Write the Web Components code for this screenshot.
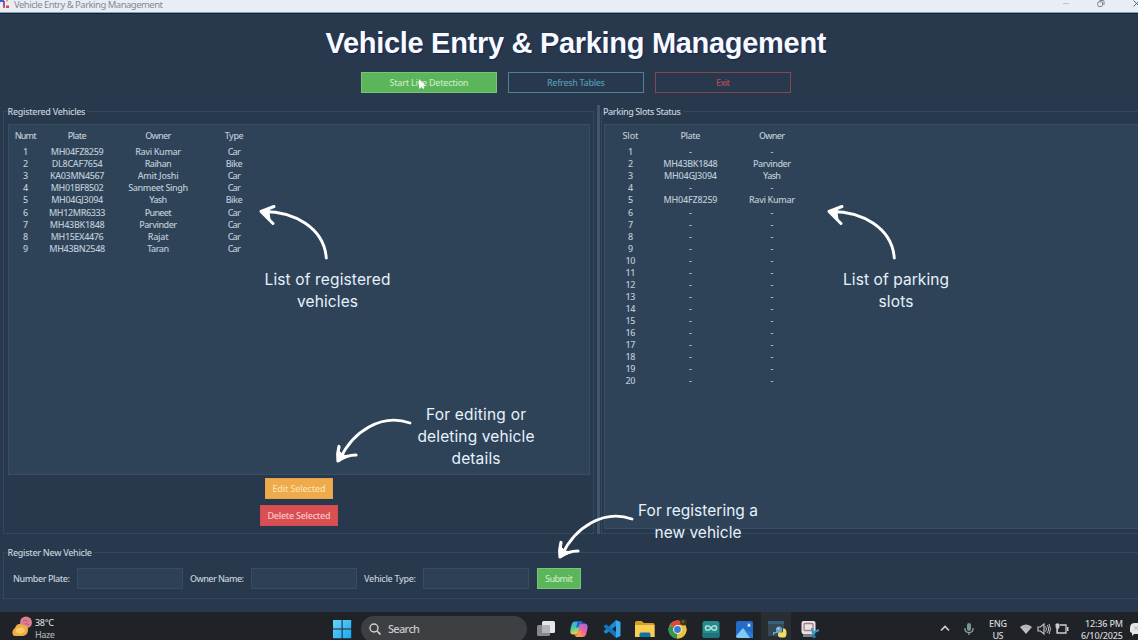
<!DOCTYPE html>
<html lang="en">
<head>
<meta charset="utf-8">
<title>Vehicle Entry &amp; Parking Management</title>
<style>
html,body{margin:0;height:100%;overflow:hidden;background:#28394e}
body{font-family:"Noto Sans","Open Sans",sans-serif;font-size:9px;font-weight:500;line-height:1.2;color:#c3ceda}
</style>
</head>
<body>
<parking-app></parking-app>
<script>
const define = (name, html, setup) => customElements.define(name, class extends HTMLElement {
  connectedCallback() {
    if (this.shadowRoot) return;
    const t = document.createElement('template');
    t.innerHTML = html;
    this.attachShadow({mode: 'open'}).append(t.content.cloneNode(true));
    if (setup) setup(this, this.shadowRoot);
  }
});

/* A single line of text tracked so that it fills the width given in "w". */
define('fit-text', `<style>
:host{display:inline-block;white-space:pre}
span{display:inline-block}
</style><span><slot></slot></span>`, (el, root) => {
  const w = parseFloat(el.getAttribute('w'));
  if (!w) return;
  const s = root.querySelector('span');
  const n = el.textContent.length;
  if (n < 2) return;
  const ls = (w - s.getBoundingClientRect().width) / (n - 1);
  s.style.letterSpacing = ls + 'px';
  s.style.marginRight = -ls + 'px';
});

define('title-bar', `<style>
:host{display:flex;height:13px;background:#e8eff4;border-bottom:1px solid #8ba0b5;box-shadow:0 1px 0 #10233a;align-items:flex-start;color:#85898f;position:relative}
.logo{width:9px;height:9px;flex:none}
.name{margin:0 0 0 5px;flex:1;font-size:9.5px;font-weight:400;line-height:9px;height:9px}
.b{width:10px;height:10px;flex:none}
</style>
<svg class="logo" viewBox="0 0 9 9"><path d="M0 0h4v2H0z" fill="#3465c0"/><path d="M3 1h2v5H3z" fill="#a04ba8"/><path d="M3 6h2v2H3z" fill="#e65a32"/><path d="M6 5.5h3V8H6z" fill="#d94457"/><path d="M6 0h2v1.5H6z" fill="#f0a03c"/></svg>
<div class="name"><fit-text w="149">Vehicle Entry &amp; Parking Management</fit-text></div>
<svg class="b" style="margin-right:25px" viewBox="0 0 10 10"><path d="M2 3.5h6" stroke="#bcc2c7" fill="none"/></svg>
<svg class="b" style="margin-right:26px" viewBox="0 0 10 10"><rect x="1.8" y="1.8" width="4.7" height="4.7" rx="1" fill="none" stroke="#7d8287"/><path d="M3.5 .5H7q1 0 1 1V5" fill="none" stroke="#7d8287"/></svg>
<svg class="b" style="margin-right:-4px" viewBox="0 0 10 10"><path d="M1.5 .5l6 6M7.5 .5l-6 6" stroke="#64696e" fill="none"/></svg>`);

define('app-button', `<style>
:host{display:flex;box-sizing:border-box;height:21px;align-items:center;justify-content:center;border:1px solid;font-size:9px;flex:none;position:relative;padding-top:1.5px}
:host([kind=success]){background:#5ab658;border-color:#79c678;color:#c7eac5}
:host([kind=warning]){background:#efab4b;border-color:#e5a44b;color:#fae0ac}
:host([kind=danger]){background:#d94f52;border-color:#cf4d51;color:#fac6c5}
:host([kind=info]){border:1.5px solid #4f8299;color:#5298b3}
:host([kind=exit]){border:1.5px solid #874651;color:#b44b50}
</style><slot></slot>`);

/* Group box with its caption set into the top rule. */
define('group-box', `<style>
:host{display:block;box-sizing:border-box;position:relative}
fieldset{margin:0;border:1.5px solid #33475d;padding:0;height:100%;box-sizing:border-box;min-width:0}
legend{padding:0 2px 0 1px;margin-left:var(--cap,3px);line-height:14px;height:12px;color:#c5d0dc;font-size:9px}
</style><fieldset><legend><fit-text></fit-text></legend><slot></slot></fieldset>`, (el, root) => {
  const old = root.querySelector('fit-text');
  const cap = document.createElement('fit-text');
  cap.textContent = el.getAttribute('caption');
  cap.setAttribute('w', el.getAttribute('w'));
  old.replaceWith(cap);
});

define('data-table', `<style>
:host{display:block;box-sizing:border-box;background:#2f4358;border:1.5px solid #394e63;font-size:9px;color:#bdc9d5}
.row{display:grid;grid-template-columns:var(--cols);justify-items:center;height:12.05px;line-height:12px}
.head{height:16.3px;padding-top:5px;line-height:13px}
fit-text{line-height:12px}
</style><div class="t"></div>`, (el, root) => {
  const box = root.querySelector('.t');
  const [head, ...rows] = el.getAttribute('rows').split(';').map(r => r.split(','));
  [head, ...rows].forEach((r, i) => {
    const d = document.createElement('div');
    d.className = i ? 'row' : 'row head';
    box.append(d);
    r.forEach(c => {
      const [text, w] = c.split('|');
      const f = document.createElement('fit-text');
      f.textContent = text;
      if (w) f.setAttribute('w', w);
      d.append(f);
    });
  });
});

define('text-field', `<style>
:host{display:block;box-sizing:border-box;height:21px;width:106px;background:#2d4056;border:1px solid #384b60;flex:none}
</style>`);

define('call-out', `<style>
:host{display:flex;flex-direction:column;align-items:center;position:absolute;transform:translateX(-50%);font:400 15.5px/22px Inter,sans-serif;color:#e6f2fc}
</style><slot></slot>`);

define('curved-arrow', `<style>
:host{display:block;position:absolute;width:84px;height:60px}
svg{display:block;width:84px;height:60px}
path{fill:none;stroke:#fff;stroke-linecap:round;stroke-linejoin:round}
</style><svg viewBox="0 0 84 60"></svg>`, (el, root) => {
  root.querySelector('svg').innerHTML = el.getAttribute('turn') === 'up'
    ? '<path d="M4 8.500C36 8 66 25 68.300 55" stroke-width="2.900"/><path d="M16 3.500L3 8.500L15 20.500" stroke-width="3"/><path d="M3 8.500l9-3.500-1 4 1 7z" style="fill:#fff" stroke-width="1"/>'
    : '<path d="M76 10C48 0 19 18 6 46" stroke-width="2.900"/><path d="M5 33.500Q3 41 4 48Q12 42 22 42" stroke-width="3.200"/><path d="M4 48l1-10 4 4 6 1z" style="fill:#fff" stroke-width="1"/>';
});

define('task-icon', `<style>
:host{display:flex;width:33px;height:28px;align-items:center;justify-content:center;flex:none}
:host([active]){background:linear-gradient(90deg,transparent 1px,#292e32 1px 31px,transparent 31px)}
svg{display:block;width:20px;height:20px;margin-top:5px}
</style><svg viewBox="0 0 20 20"></svg>`, (el, root) => {
  const art = {
    tasks: '<rect x="6" y="2" width="13" height="12" rx="1.5" fill="#e5e6e7"/><rect x="1" y="6" width="13" height="11" rx="1.5" fill="#84888b"/><path d="M6 6h8v8H6z" fill="#b1b4b6"/>',
    copilot: '<defs><linearGradient id="a" x1="0" y1="0" x2=".3" y2="1"><stop stop-color="#3ba1ef"/><stop offset=".5" stop-color="#43c9ac"/><stop offset="1" stop-color="#eed24a"/></linearGradient><linearGradient id="b" x1="1" y1="0" x2=".3" y2="1"><stop stop-color="#a65ef0"/><stop offset=".55" stop-color="#ed659b"/><stop offset="1" stop-color="#f7a049"/></linearGradient></defs><path d="M5.500 2.500H13L8.700 14Q8 15.500 6 15.500H4Q1 15.500 1.300 12Q1.600 8 3 4.500Q3.800 2.500 5.500 2.500z" fill="url(#a)"/><path d="M13.500 18H7l4.300-12Q12 4.500 14 4.500h2Q19 5 18.600 8.500Q18 12.500 17 15.500Q16 18 13.500 18z" fill="url(#b)"/><path d="M8.500 2.500H12q2 0 2.700 2H12q-1 0-1.500 1.500L9.600 8.500H7z" fill="#2866d5"/><path d="M5.300 15.500H8l1.400-3.500h3l-1.600 4.500Q10.300 18 8.500 18Q6.300 18 5.300 15.500z" fill="#f59a52"/>',
    code: '<path d="M14 1l4.500 2v14L14 19z" fill="#38a9ef"/><path d="M14 1L1.500 12.500L4 14.800L14 7z" fill="#188bd5"/><path d="M14 19L1.500 7.500L4 5.200L14 13z" fill="#1476bb"/>',
    files: '<path d="M0 3.500q0-1.500 1.500-1.500h5L9 4h9q1.500 0 1.500 1.500V18H0z" fill="#d99b26"/><path d="M0 6h19.500v12H0z" fill="#f8ce55"/><path d="M4.500 18v-3q0-1.500 1.500-1.500h8q1.500 0 1.500 1.500v3z" fill="#1570a8"/>',
    chrome: '<circle cx="9.500" cy="10.500" r="9" fill="#ecc53d"/><path d="M9.500 10.500L1.700 6A9 9 0 0 1 17.300 6z" fill="#dc4a3c"/><path d="M9.500 10.500L1.700 6A9 9 0 0 0 9 19.500z" fill="#31984f"/><path d="M9.500 10.500L13.400 12.700L9 19.500A9 9 0 0 0 17.300 6H9.500z" fill="#ecc53d"/><circle cx="9.500" cy="10.500" r="4.400" fill="#f3f4ee"/><circle cx="9.500" cy="10.500" r="3.400" fill="#397bd1"/><circle cx="15.500" cy="3" r="3.400" fill="#39341f"/><circle cx="15" cy="2.700" r="1.300" fill="#74632c"/>',
    arduino: '<rect x="1.500" y="2" width="17" height="17" rx="2.500" fill="#278b8d"/><path d="M1.500 14h17v2.500q0 2.500-2.500 2.500H4q-2.500 0-2.500-2.500z" fill="#1b777b"/><path d="M10 9C8 6 4.500 6 4.500 9S8 12 10 9S15.500 6 15.500 9S12 12 10 9z" fill="none" stroke="#b1e4df" stroke-width="1.500"/>',
    photos: '<rect x="2" y="2" width="17" height="17" rx="2" fill="#236bc5"/><path d="M2 17l7-8 9 10H4q-2 0-2-2z" fill="#80caf5"/><path d="M9 9l4 4.500 2-2 4 4V19h-3z" fill="#2b7bd4"/><path d="M13.500 4l1.500 1.300L16.500 4 16 6.200l1 1.300h-4l1-1.300z" fill="#e3f3fd"/>',
    python: '<rect x="1" y="2" width="16" height="15" fill="#344956"/><path d="M1 2h16v3H1z" fill="#365f82"/><path d="M9 13v-3q0-2.500 3-2.500t3 2.500v2q0 2-2 2H9q-2 0-2 2H6v-3z" fill="#6ea4cb"/><path d="M16 9.500h1q2.500 0 2.500 4.500t-2.500 4.500h-3q-3 0-3-2.500V15q0-1.500 2-1.500h1.500Q16 13.500 16 12z" fill="#f3dc66"/><circle cx="11.200" cy="9.500" r=".7" fill="#fff"/>',
    snip: '<rect x="1.500" y="2" width="14" height="13" rx="2" fill="#e7e3e5"/><rect x="4" y="4.500" width="9" height="7" rx="1" fill="none" stroke="#a87c86" stroke-width="1.300"/><path d="M3 15h10v3H3z" fill="#78818b"/><path d="M12 9l2 9M19 11l-7 3" stroke="#3197c3" stroke-width="2"/><circle cx="14" cy="17.500" r="1.800" fill="#247ea8"/>',
    start: '<defs><linearGradient id="s" x1="0" y1="0" x2="1" y2="1"><stop stop-color="#68d3fa"/><stop offset="1" stop-color="#1ca7ef"/></linearGradient></defs><path d="M1 1h8.600v8.600H1zM10.600 1h8.600v8.600h-8.600zM1 10.600h8.600v8.600H1zM10.600 10.600h8.600v8.600h-8.600z" fill="url(#s)"/>'
  };
  root.querySelector('svg').innerHTML = art[el.getAttribute('name')];
});

define('task-bar', `<style>
:host{display:flex;height:28px;background:#1f2226;overflow:hidden;color:#d5d7d9;font-size:9px}
.weather{width:322px;display:flex;box-sizing:border-box;padding:2px 0 0 11px;gap:2px;flex:none}
.weather>svg{width:22px;height:24px;flex:none}
.two{display:flex;flex-direction:column;flex:none}
.two fit-text{line-height:12px;height:12px}
.search{box-sizing:border-box;width:166px;height:26px;margin:4px 2px 0 3px;background:#3d4042;border-radius:13px;display:flex;align-items:center;padding-left:8px;gap:7px;font-size:11px;flex:none;color:#c8cacb}
.search svg{width:12px;height:12px}
.tray{margin-left:auto;display:flex;flex:none;width:200px}
.tray>svg{height:14px;flex:none;margin-top:10px}
</style>
<div class="weather"><svg viewBox="0 0 22 24"><circle cx="15" cy="8.500" r="6" fill="#dc7f91"/><path d="M2 21Q0 17 4 14Q6 8 12 11Q17 11 17 16Q17 21 12 22H5Q2 22 2 21z" fill="#f1ac43"/><path d="M5 18Q4 14 8 14Q13 12 14 17Q10 22 5 18z" fill="#f8ce69"/><path d="M12 7q3-2 5 1M14 10q2-1 4 1" stroke="#ad5973" fill="none"/></svg>
<div class="two" style="margin-top:3px"><fit-text w="19">38°C</fit-text><fit-text w="20" style="color:#a7aaad">Haze</fit-text></div></div>
<slot name="start"></slot>
<div class="search"><svg viewBox="0 0 12 12"><circle cx="5" cy="5" r="4" fill="none" stroke="#d0d2d3" stroke-width="1.400"/><path d="M8 8l3.500 3.500" stroke="#d0d2d3" stroke-width="1.700"/></svg><fit-text w="32">Search</fit-text></div>
<slot></slot>
<div class="tray">
<svg style="width:10px;margin-left:2px" viewBox="0 0 10 14"><path d="M1 8.500L5 4.500L9 8.500" fill="none" stroke="#cfd1d2" stroke-width="1.600"/></svg>
<svg style="width:10px;margin-left:14px" viewBox="0 0 10 14"><rect x="3" y="1" width="4" height="8" rx="2" fill="#6f9a95"/><path d="M1 6v1q0 3.500 4 3.500t4-3.500V6M5 10.500V13" fill="none" stroke="#a1aaa9" stroke-width="1.200"/></svg>
<div class="two" style="width:26px;margin:5.500px 0 0 11px;align-items:center"><fit-text w="18">ENG</fit-text><fit-text w="11">US</fit-text></div>
<svg style="width:14px;margin-left:8px" viewBox="0 0 14 14"><path d="M1 5Q7 0 13 5L7 12z" fill="#bcbec0"/><path d="M2.500 6.500Q7 3 11.500 6.500" fill="none" stroke="#94979a" stroke-width=".6"/></svg>
<svg style="width:14px;margin-left:4px" viewBox="0 0 14 14"><path d="M1 5h2.500L7 2v10L3.500 9H1z" fill="none" stroke="#bfc1c3" stroke-width="1.200"/><path d="M8.500 4.500q2 2.500 0 5M10 3q3.300 4 0 8M12 2q3 5 0 10" fill="none" stroke="#bfc1c3"/></svg>
<svg style="width:14px;margin-left:4px" viewBox="0 0 14 14"><path d="M5 3h6v8H2V7" fill="none" stroke="#cbcdcf" stroke-width="1.300"/><path d="M12 5h1.500v4H12z" fill="#cbcdcf"/><path d="M1 2v2q0 3 1.500 3T4 4V2zM2.500 6v5" fill="#cbcdcf" stroke="#cbcdcf"/></svg>
<div class="two" style="width:44px;margin:5.500px 0 0 10px;align-items:flex-end"><fit-text w="38">12:36 PM</fit-text><fit-text w="42">6/10/2025</fit-text></div>
<svg style="width:14px;margin:10px 0 0 5px" viewBox="0 0 14 14"><path d="M2 10V6Q2 1 7 1h7v11H6l-2 2v-3z" fill="#e5e6e7"/><path d="M6 4l4 4M10 4L6 8" stroke="#b3b5b6"/></svg>
</div>`);

const left = 'Numt|22,Plate|19,Owner|26,Type|19;' + [
  '1,MH04FZ8259|53,Ravi Kumar|46,Car|13', '2,DL8CAF7654|51,Raihan|27,Bike|17', '3,KA03MN4567|54.5,Amit Joshi|41,Car|13',
  '4,MH01BF8502|53,Sanmeet Singh|60,Car|13', '5,MH04GJ3094|52,Yash|18,Bike|17', '6,MH12MR6333|56.5,Puneet|27,Car|13',
  '7,MH43BK1848|55,Parvinder|38,Car|13', '8,MH15EX4476|53,Rajat|21,Car|13', '9,MH43BN2548|56,Taran|22,Car|13'].join(';');
const taken = {2: 'MH43BK1848|54.5,Parvinder|38', 3: 'MH04GJ3094|53,Yash|18', 5: 'MH04FZ8259|54,Ravi Kumar|46'};
const right = 'Slot|16,Plate|20,Owner|26;' + Array.from({length: 20}, (_, i) => `${i + 1}${i > 8 ? '|10' : ''},${taken[i + 1] || '-,-'}`).join(';');

define('parking-app', `<style>
:host{display:flex;flex-direction:column;width:1138px;height:640px;overflow:hidden;position:relative;background:#28394e}
title-bar{flex:none;height:13px;box-sizing:border-box}
header{display:flex;flex-direction:column;align-items:center;flex:none;height:92px;box-sizing:border-box;padding:12.500px 0 0;margin-left:14px}
h1{margin:0;font:bold 29px/35px "Liberation Sans",sans-serif;color:#f7faff;text-shadow:1px 1px 1px #182450}
.actions{display:flex;gap:11px;margin-top:11.500px}
.actions app-button{width:136px}
.cursor{position:absolute;left:56px;top:5px;width:9px;height:12px}
.panes{display:flex;flex:none;height:429px;padding-left:2.500px}
.vehicles{width:591.500px;flex:none}
.vehicles data-table{width:581.500px;height:351px;margin:7px 0 0 4.500px;--cols:31px 72px 90px 62px;padding-left:1.200px}
.edit{display:flex;flex-direction:column;align-items:center;gap:6px;margin:3px 0 0 1.500px}
.sash{width:3px;margin:0 1px 0 3px;background:#42556a;flex:none}
.slots{width:560px;flex:none;--cap:0px}
.slots data-table{height:405px;width:550px;margin:7px 0 0 2px;--cols:51px 69px 94px}
.register{height:53px;margin:12px 0 0 2.500px;width:1160px;flex:none;position:relative}
form{display:flex;align-items:center;margin:10px 0 0 9.500px;color:#c3ceda}
form fit-text{padding-top:1px}
.register app-button{width:44px;margin-left:8px}
task-bar{margin-top:auto;flex:none}
</style>
<title-bar></title-bar>
<header><h1><fit-text w="501">Vehicle Entry &amp; Parking Management</fit-text></h1>
<div class="actions"><app-button kind="success"><fit-text w="79">Start Live Detection</fit-text><svg class="cursor" viewBox="0 0 9 12"><path d="M1 1v10l2.500-2 1.500 2 1.500-1-1.200-2H8z" fill="#fff"/></svg></app-button><app-button kind="info"><fit-text w="58">Refresh Tables</fit-text></app-button><app-button kind="exit"><fit-text w="14">Exit</fit-text></app-button></div></header>
<div class="panes">
<group-box class="vehicles" caption="Registered Vehicles" w="78"><data-table rows="${left}"></data-table>
<div class="edit"><app-button kind="warning" style="width:68px"><fit-text w="53">Edit Selected</fit-text></app-button><app-button kind="danger" style="width:78px"><fit-text w="63">Delete Selected</fit-text></app-button></div></group-box>
<div class="sash"></div>
<group-box class="slots" caption="Parking Slots Status" w="78"><data-table rows="${right}"></data-table></group-box>
</div>
<group-box class="register" caption="Register New Vehicle" w="84.500"><form>
<fit-text w="57">Number Plate:</fit-text><text-field style="margin:0 6.500px 0 7.500px"></text-field>
<fit-text w="54">Owner Name:</fit-text><text-field style="margin:0 7px 0 7px"></text-field>
<fit-text w="52">Vehicle Type:</fit-text><text-field style="margin:0 0 0 7px"></text-field>
<app-button kind="success"><fit-text w="28">Submit</fit-text></app-button></form></group-box>
<task-bar><task-icon name="start" slot="start" style="width:40px;margin-right:-4px"></task-icon>
<task-icon name="tasks"></task-icon><task-icon name="copilot"></task-icon><task-icon name="code"></task-icon><task-icon name="files"></task-icon><task-icon name="chrome"></task-icon><task-icon name="arduino"></task-icon><task-icon name="photos"></task-icon><task-icon name="python" active></task-icon><task-icon name="snip"></task-icon></task-bar>
<curved-arrow turn="up" style="left:258px;top:203px"></curved-arrow>
<curved-arrow turn="up" style="left:826.400px;top:203px"></curved-arrow>
<curved-arrow turn="down" style="left:333.500px;top:413px"></curved-arrow>
<curved-arrow turn="down" style="left:555.500px;top:509px"></curved-arrow>
<call-out style="left:327.500px;top:269px"><fit-text w="126">List of registered</fit-text><fit-text w="61">vehicles</fit-text></call-out>
<call-out style="left:896px;top:269px"><fit-text w="106">List of parking</fit-text><fit-text w="35">slots</fit-text></call-out>
<call-out style="left:476px;top:404px"><fit-text w="100">For editing or</fit-text><fit-text w="117">deleting vehicle</fit-text><fit-text w="49">details</fit-text></call-out>
<call-out style="left:698px;top:500px"><fit-text w="120">For registering a</fit-text><fit-text w="87">new vehicle</fit-text></call-out>`);
</script>
</body>
</html>
